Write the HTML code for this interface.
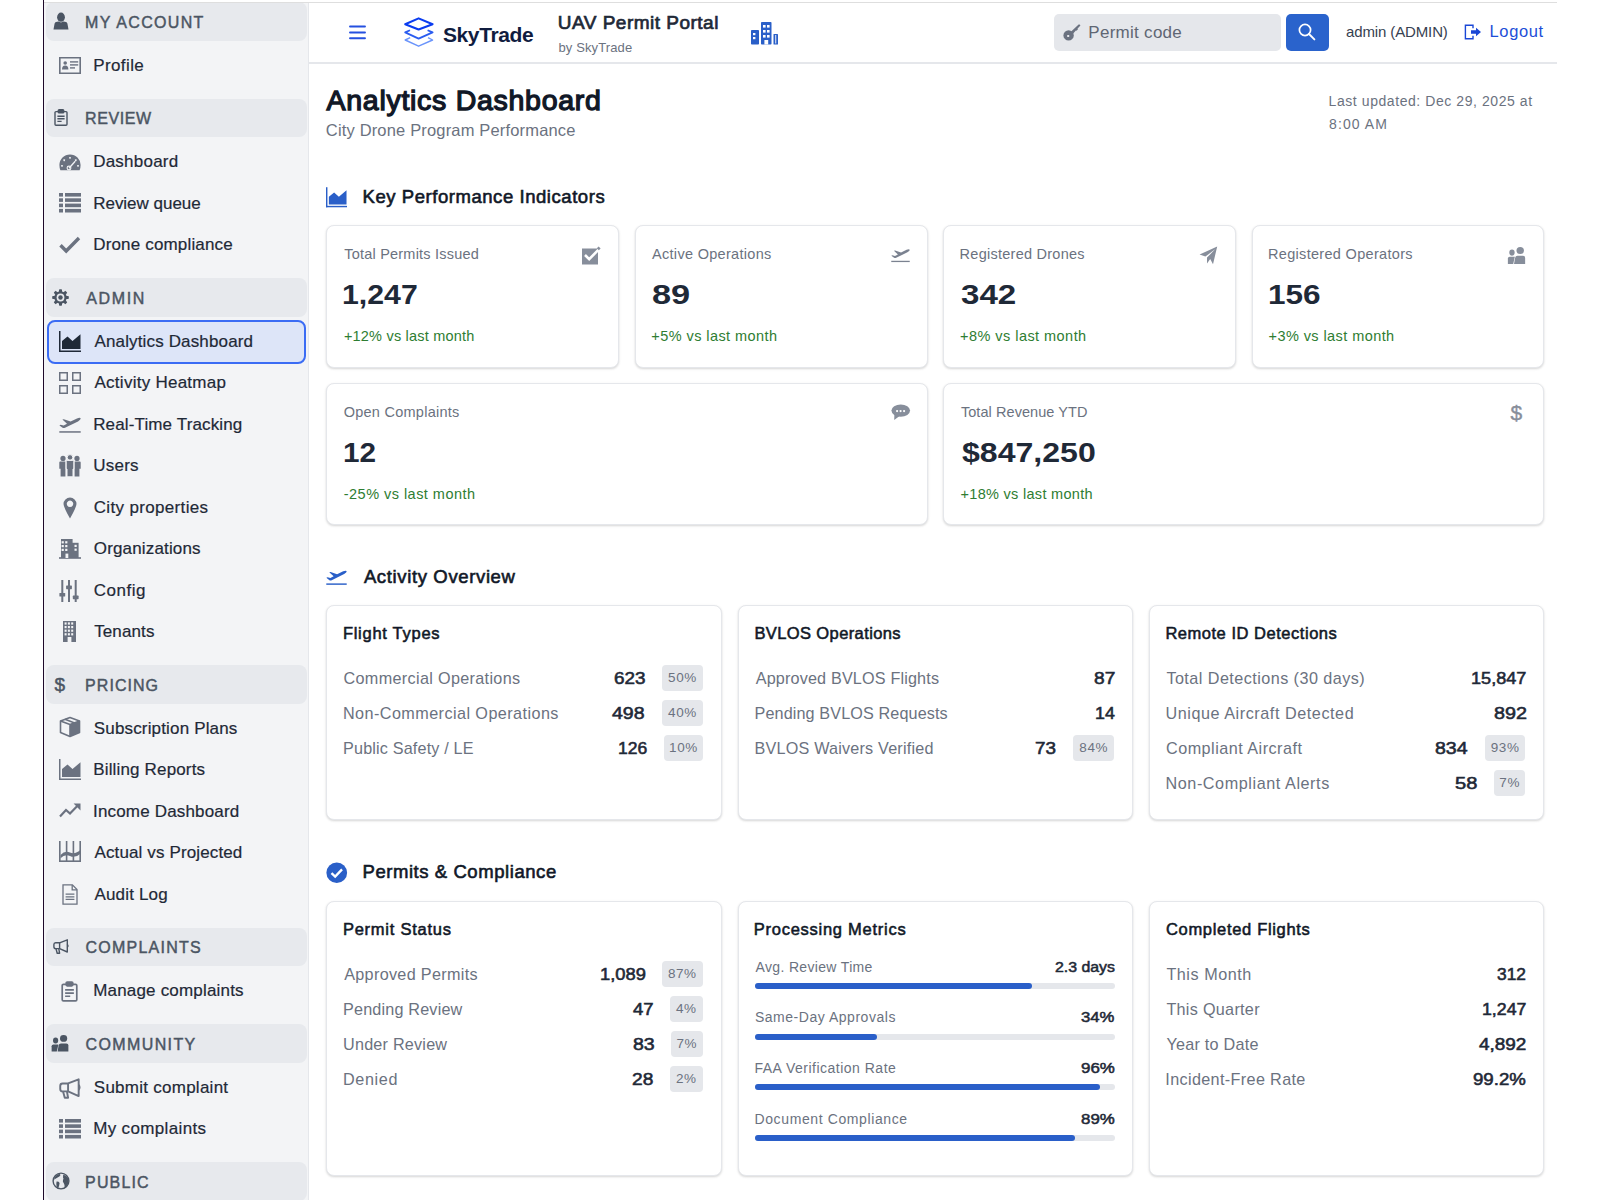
<!DOCTYPE html>
<html><head><meta charset="utf-8"><title>Analytics Dashboard</title>
<style>
html,body{margin:0;padding:0;width:1600px;height:1200px;overflow:hidden;background:#fff;}
body{position:relative;font-family:"Liberation Sans",sans-serif;}
.t{position:absolute;white-space:nowrap;}
svg{overflow:visible}
</style></head><body>
<div style="position:absolute;left:43px;top:0;width:1px;height:1200px;background:#1e0a2a"></div>
<div style="position:absolute;left:44px;top:2px;width:265px;height:1198px;background:#f3f4f6"></div>
<div style="position:absolute;left:308px;top:2px;width:1px;height:1198px;background:#e5e7eb"></div>
<div style="position:absolute;left:45.8px;top:2.0px;width:261.7px;height:38.5px;background:#e7e9ed;border-radius:8px"></div>
<div class="t" style="left:85.10px;top:11.76px;font-size:16px;line-height:21px;color:#4b5563;font-weight:400;letter-spacing:1.322px;-webkit-text-stroke:0.45px #4b5563;">MY ACCOUNT</div>
<svg style="position:absolute;left:53px;top:12.0px;" width="16" height="18" viewBox="0 0 16 18"><g fill="#4b5563"><ellipse cx="8" cy="5.2" rx="3.9" ry="4.6"/><path d="M0.5 17.5 L1.6 11.6 Q2 10 4 9.8 L5.8 9.6 Q8 11.2 10.2 9.6 L12 9.8 Q14 10 14.4 11.6 L15.5 17.5 Z"/></g></svg>
<svg style="position:absolute;left:58.5px;top:57.0px;" width="22" height="17" viewBox="0 0 22 17"><g fill="#6b7280"><path d="M0 0H22V17H0Z M1.6 1.6V15.4H20.4V1.6Z" fill-rule="evenodd"/><circle cx="6.2" cy="6" r="1.8"/><path d="M3 12.6 Q3 8.6 6.2 8.6 Q9.4 8.6 9.4 12.6Z"/><rect x="11" y="4.2" width="8.2" height="1.4"/><rect x="11" y="7.2" width="8.2" height="1.4"/><rect x="11" y="10.2" width="5" height="1.4"/></g></svg>
<div class="t" style="left:93.20px;top:54.61px;font-size:17px;line-height:22px;color:#1f2937;font-weight:400;letter-spacing:0.400px;-webkit-text-stroke:0.2px #1f2937;">Profile</div>
<div style="position:absolute;left:45.8px;top:98.5px;width:261.7px;height:38.5px;background:#e7e9ed;border-radius:8px"></div>
<div class="t" style="left:85.10px;top:108.26px;font-size:16px;line-height:21px;color:#4b5563;font-weight:400;letter-spacing:0.560px;-webkit-text-stroke:0.45px #4b5563;">REVIEW</div>
<svg style="position:absolute;left:54px;top:109.0px;" width="14" height="17" viewBox="0 0 14 17"><g fill="none" stroke="#4b5563" stroke-width="1.4"><rect x="1" y="2.6" width="12" height="13.6" rx="1"/><rect x="4.3" y="0.8" width="5.4" height="3" rx="0.8" fill="#4b5563"/><path d="M3.4 7.2H10.6M3.4 9.8H10.6M3.4 12.4H7.6"/></g></svg>
<svg style="position:absolute;left:58.5px;top:153.5px;" width="22" height="17" viewBox="0 0 22 17"><path fill="#6b7280" fill-rule="evenodd" d="M11 0.5 A10.6 10.6 0 0 1 21.6 11.1 Q21.6 14 20.6 16.3 H1.4 Q0.4 14 0.4 11.1 A10.6 10.6 0 0 1 11 0.5Z M11 3 a0.9 0.9 0 1 0 0.01 0Z M5.2 5.3 a0.9 0.9 0 1 0 0.01 0Z M16.8 5.3 a0.9 0.9 0 1 0 0.01 0Z M3 11 a0.9 0.9 0 1 0 0.01 0Z M19 11 a0.9 0.9 0 1 0 0.01 0Z"/><path d="M10 14.2 L16.2 7.2" stroke="#f3f4f6" stroke-width="1.3"/><circle cx="10" cy="14" r="1.9" fill="none" stroke="#f3f4f6" stroke-width="1.1"/></svg>
<div class="t" style="left:93.20px;top:151.11px;font-size:17px;line-height:22px;color:#1f2937;font-weight:400;letter-spacing:0.225px;-webkit-text-stroke:0.2px #1f2937;">Dashboard</div>
<svg style="position:absolute;left:58.5px;top:193.0px;" width="22" height="21" viewBox="0 0 22 21"><g fill="#6b7280"><rect x="0" y="0.0" width="4" height="3.6"/><rect x="6" y="0.0" width="16" height="3.6"/><rect x="0" y="5.3" width="4" height="3.6"/><rect x="6" y="5.3" width="16" height="3.6"/><rect x="0" y="10.6" width="4" height="3.6"/><rect x="6" y="10.6" width="16" height="3.6"/><rect x="0" y="15.9" width="4" height="3.6"/><rect x="6" y="15.9" width="16" height="3.6"/></g></svg>
<div class="t" style="left:93.20px;top:192.61px;font-size:17px;line-height:22px;color:#1f2937;font-weight:400;letter-spacing:-0.018px;-webkit-text-stroke:0.2px #1f2937;">Review queue</div>
<svg style="position:absolute;left:58.5px;top:236.0px;" width="22" height="18" viewBox="0 0 22 18"><path d="M1.5 9.2 L7.2 15 L20 2" fill="none" stroke="#6b7280" stroke-width="3.4" stroke-linejoin="miter"/></svg>
<div class="t" style="left:93.20px;top:234.11px;font-size:17px;line-height:22px;color:#1f2937;font-weight:400;letter-spacing:0.167px;-webkit-text-stroke:0.2px #1f2937;">Drone compliance</div>
<div style="position:absolute;left:45.8px;top:278.0px;width:261.7px;height:38.5px;background:#e7e9ed;border-radius:8px"></div>
<div class="t" style="left:86.30px;top:287.76px;font-size:16px;line-height:21px;color:#4b5563;font-weight:400;letter-spacing:1.625px;-webkit-text-stroke:0.45px #4b5563;">ADMIN</div>
<svg style="position:absolute;left:52px;top:288.5px;" width="17" height="17" viewBox="0 0 17 17"><g fill="#4b5563"><rect x="7" y="0.2" width="3" height="4" rx="0.8" transform="rotate(0 8.5 8.5)"/><rect x="7" y="0.2" width="3" height="4" rx="0.8" transform="rotate(45 8.5 8.5)"/><rect x="7" y="0.2" width="3" height="4" rx="0.8" transform="rotate(90 8.5 8.5)"/><rect x="7" y="0.2" width="3" height="4" rx="0.8" transform="rotate(135 8.5 8.5)"/><rect x="7" y="0.2" width="3" height="4" rx="0.8" transform="rotate(180 8.5 8.5)"/><rect x="7" y="0.2" width="3" height="4" rx="0.8" transform="rotate(225 8.5 8.5)"/><rect x="7" y="0.2" width="3" height="4" rx="0.8" transform="rotate(270 8.5 8.5)"/><rect x="7" y="0.2" width="3" height="4" rx="0.8" transform="rotate(315 8.5 8.5)"/><circle cx="8.5" cy="8.5" r="6.2"/></g><circle cx="8.5" cy="8.5" r="3.9" fill="#e7e9ed"/><circle cx="8.5" cy="8.5" r="2.2" fill="#4b5563"/></svg>
<div style="position:absolute;left:46.5px;top:319.5px;width:259.5px;height:44.5px;box-sizing:border-box;border:2px solid #3b6cf4;background:#dde5f8;border-radius:8px"></div>
<svg style="position:absolute;left:58.5px;top:331.0px;" width="22" height="21" viewBox="0 0 22 21"><g fill="#1f2937"><rect x="0" y="0" width="1.5" height="21"/><rect x="0" y="19.5" width="22" height="1.5"/><path d="M3 18 V10 L8.5 5.5 L13.5 10 L21.5 3.2 V18Z"/></g></svg>
<div class="t" style="left:94.50px;top:330.61px;font-size:17px;line-height:22px;color:#1f2937;font-weight:400;letter-spacing:0.144px;-webkit-text-stroke:0.2px #1f2937;">Analytics Dashboard</div>
<svg style="position:absolute;left:58.5px;top:372.0px;" width="22" height="22" viewBox="0 0 22 22"><g fill="none" stroke="#6b7280" stroke-width="1.5"><rect x="0.75" y="0.75" width="7.5" height="7.5"/><rect x="13.75" y="0.75" width="7.5" height="7.5"/><rect x="0.75" y="13.75" width="7.5" height="7.5"/><rect x="13.75" y="13.75" width="7.5" height="7.5"/></g></svg>
<div class="t" style="left:94.50px;top:372.11px;font-size:17px;line-height:22px;color:#1f2937;font-weight:400;letter-spacing:0.260px;-webkit-text-stroke:0.2px #1f2937;">Activity Heatmap</div>
<svg style="position:absolute;left:58.5px;top:416.0px;" width="22" height="17" viewBox="0 0 22 17"><g fill="#6b7280"><path d="M3.4 3.6 L4.8 3.2 L11.6 5.6 L18 2.4 Q21.4 1.2 21.7 2.6 Q21.8 3.8 19 5.4 L6 11.8 Q4.6 12.4 3.6 11.8 L0.4 9.4 L1.6 8.8 L4.6 9.6 L8 7.8Z"/><rect x="0.3" y="15.2" width="21.4" height="1.5"/></g></svg>
<div class="t" style="left:93.20px;top:413.61px;font-size:17px;line-height:22px;color:#1f2937;font-weight:400;letter-spacing:0.138px;-webkit-text-stroke:0.2px #1f2937;">Real-Time Tracking</div>
<svg style="position:absolute;left:58.5px;top:455.0px;" width="22" height="22" viewBox="0 0 22 22"><g fill="#6b7280"><circle cx="4" cy="3.4" r="2.6"/><path d="M0.3 7.4 Q0.3 6.6 1.2 6.6 H6.4 V21.5 H1.6 V13.8 H0.3Z"/><circle cx="18" cy="3.4" r="2.6"/><path d="M21.7 7.4 Q21.7 6.6 20.8 6.6 H15.6 V21.5 H20.4 V13.8 H21.7Z"/></g><g fill="#6b7280" stroke="#f3f4f6" stroke-width="1"><circle cx="11" cy="2.4" r="2.8"/><path d="M7.2 6.4 Q7.2 5.4 8.2 5.4 H13.8 Q14.8 5.4 14.8 6.4 V14 H14 V21.8 H8 V14 H7.2Z"/></g></svg>
<div class="t" style="left:93.30px;top:455.11px;font-size:17px;line-height:22px;color:#1f2937;font-weight:400;letter-spacing:0.225px;-webkit-text-stroke:0.2px #1f2937;">Users</div>
<svg style="position:absolute;left:62.5px;top:496.5px;" width="14" height="22" viewBox="0 0 14 22"><path fill="#6b7280" fill-rule="evenodd" d="M7 0.5 A6.5 6.5 0 0 1 13.5 7 Q13.5 10 7 21.5 Q0.5 10 0.5 7 A6.5 6.5 0 0 1 7 0.5Z M7 3.6 a3.2 3.2 0 1 0 0.01 0Z"/></svg>
<div class="t" style="left:93.70px;top:496.61px;font-size:17px;line-height:22px;color:#1f2937;font-weight:400;letter-spacing:0.343px;-webkit-text-stroke:0.2px #1f2937;">City properties</div>
<svg style="position:absolute;left:58.5px;top:539.0px;" width="22" height="20" viewBox="0 0 22 20"><g fill="#6b7280"><rect x="2" y="0" width="11.6" height="19"/><rect x="13" y="3.8" width="6.6" height="15.2"/><rect x="0" y="18.2" width="22" height="1.6"/></g><rect x="2.6" y="2.2" width="2.2" height="2.2" fill="#f3f4f6"/><rect x="2.6" y="6.0" width="2.2" height="2.2" fill="#f3f4f6"/><rect x="2.6" y="9.8" width="2.2" height="2.2" fill="#f3f4f6"/><rect x="6.2" y="2.2" width="2.2" height="2.2" fill="#f3f4f6"/><rect x="6.2" y="6.0" width="2.2" height="2.2" fill="#f3f4f6"/><rect x="6.2" y="9.8" width="2.2" height="2.2" fill="#f3f4f6"/><rect x="15.5" y="5.8" width="2.2" height="2.2" fill="#f3f4f6"/><rect x="15.5" y="9.6" width="2.2" height="2.2" fill="#f3f4f6"/><rect x="6.5" y="14.6" width="2.8" height="4.4" fill="#f3f4f6"/></svg>
<div class="t" style="left:93.80px;top:538.11px;font-size:17px;line-height:22px;color:#1f2937;font-weight:400;letter-spacing:0.158px;-webkit-text-stroke:0.2px #1f2937;">Organizations</div>
<svg style="position:absolute;left:59px;top:579.5px;" width="20" height="22" viewBox="0 0 20 22"><g fill="#6b7280"><rect x="2.3" y="0" width="2" height="22"/><rect x="0.4" y="13" width="5.8" height="3.6" rx="0.6"/><rect x="9" y="0" width="2" height="22"/><rect x="7.1" y="5.6" width="5.8" height="3.6" rx="0.6"/><rect x="15.7" y="0" width="2" height="22"/><rect x="13.8" y="15.6" width="5.8" height="3.6" rx="0.6"/></g></svg>
<div class="t" style="left:93.70px;top:579.61px;font-size:17px;line-height:22px;color:#1f2937;font-weight:400;letter-spacing:0.540px;-webkit-text-stroke:0.2px #1f2937;">Config</div>
<svg style="position:absolute;left:62.5px;top:620.5px;" width="13" height="21" viewBox="0 0 13 21"><rect x="0" y="0" width="13" height="21" fill="#6b7280"/><rect x="1.6" y="1.4" width="2" height="2.2" fill="#f3f4f6"/><rect x="1.6" y="5.0" width="2" height="2.2" fill="#f3f4f6"/><rect x="1.6" y="8.6" width="2" height="2.2" fill="#f3f4f6"/><rect x="1.6" y="12.2" width="2" height="2.2" fill="#f3f4f6"/><rect x="4.9" y="1.4" width="2" height="2.2" fill="#f3f4f6"/><rect x="4.9" y="5.0" width="2" height="2.2" fill="#f3f4f6"/><rect x="4.9" y="8.6" width="2" height="2.2" fill="#f3f4f6"/><rect x="4.9" y="12.2" width="2" height="2.2" fill="#f3f4f6"/><rect x="8.2" y="1.4" width="2" height="2.2" fill="#f3f4f6"/><rect x="8.2" y="5.0" width="2" height="2.2" fill="#f3f4f6"/><rect x="8.2" y="8.6" width="2" height="2.2" fill="#f3f4f6"/><rect x="8.2" y="12.2" width="2" height="2.2" fill="#f3f4f6"/><rect x="4.6" y="16" width="3.8" height="5" fill="#f3f4f6"/></svg>
<div class="t" style="left:94.20px;top:621.11px;font-size:17px;line-height:22px;color:#1f2937;font-weight:400;letter-spacing:0.108px;-webkit-text-stroke:0.2px #1f2937;">Tenants</div>
<div style="position:absolute;left:45.8px;top:665.0px;width:261.7px;height:38.5px;background:#e7e9ed;border-radius:8px"></div>
<div class="t" style="left:85.10px;top:674.76px;font-size:16px;line-height:21px;color:#4b5563;font-weight:400;letter-spacing:1.042px;-webkit-text-stroke:0.45px #4b5563;">PRICING</div>
<div class="t" style="left:54.50px;top:672.22px;font-size:19px;line-height:25px;color:#4b5563;font-weight:400;-webkit-text-stroke:0.5px #4b5563;">$</div>
<svg style="position:absolute;left:58.5px;top:716.0px;" width="22" height="22" viewBox="0 0 22 22"><g fill="none" stroke="#6b7280" stroke-width="1.6" stroke-linejoin="round"><path d="M11 1.5 L20.5 5 V16.6 L11 20.5 L1.5 16.6 V5Z"/><path d="M1.5 5 L11 8.6 L20.5 5 M11 8.6 V20.5 M6 3.3 L15.6 7"/></g><path fill="#6b7280" d="M11 8.6 L20.5 5 V16.6 L11 20.5Z"/></svg>
<div class="t" style="left:93.80px;top:717.61px;font-size:17px;line-height:22px;color:#1f2937;font-weight:400;letter-spacing:0.162px;-webkit-text-stroke:0.2px #1f2937;">Subscription Plans</div>
<svg style="position:absolute;left:58.5px;top:758.5px;" width="22" height="21" viewBox="0 0 22 21"><g fill="#6b7280"><rect x="0" y="0" width="1.5" height="21"/><rect x="0" y="19.5" width="22" height="1.5"/><path d="M3 18 V10 L8.5 5.5 L13.5 10 L21.5 3.2 V18Z"/></g></svg>
<div class="t" style="left:93.20px;top:759.11px;font-size:17px;line-height:22px;color:#1f2937;font-weight:400;letter-spacing:0.164px;-webkit-text-stroke:0.2px #1f2937;">Billing Reports</div>
<svg style="position:absolute;left:58.5px;top:801.5px;" width="22" height="16" viewBox="0 0 22 16"><path d="M1 14.5 L7 8 L11 11.5 L19 3.2" fill="none" stroke="#6b7280" stroke-width="2.2"/><path d="M14.6 1.5 H21.5 V8.4Z" fill="#6b7280"/></svg>
<div class="t" style="left:93.00px;top:800.61px;font-size:17px;line-height:22px;color:#1f2937;font-weight:400;letter-spacing:0.177px;-webkit-text-stroke:0.2px #1f2937;">Income Dashboard</div>
<svg style="position:absolute;left:58.5px;top:841.0px;" width="22" height="21" viewBox="0 0 22 21"><g fill="#6b7280"><rect x="0" y="0" width="1.6" height="21"/><rect x="0" y="19.4" width="22" height="1.6"/><rect x="6.8" y="0" width="1.6" height="20"/><rect x="13.6" y="0" width="1.6" height="20"/><rect x="20.4" y="0" width="1.6" height="20"/><path d="M1.5 14 Q6 9 11 11.5 Q16 14 21.8 8.5 V12.4 Q16 17.6 11 15 Q6 12.6 1.5 17.2Z"/></g></svg>
<div class="t" style="left:94.50px;top:842.11px;font-size:17px;line-height:22px;color:#1f2937;font-weight:400;letter-spacing:0.125px;-webkit-text-stroke:0.2px #1f2937;">Actual vs Projected</div>
<svg style="position:absolute;left:61.5px;top:884.0px;" width="16" height="21" viewBox="0 0 16 21"><g fill="none" stroke="#6b7280" stroke-width="1.3"><path d="M1 0.9 H10.4 L15 5.5 V20.1 H1Z"/><path d="M10.2 1 V5.8 H15" /><path d="M3.6 10.2 H12.4 M3.6 12.8 H12.4 M3.6 15.4 H12.4"/></g></svg>
<div class="t" style="left:94.50px;top:883.61px;font-size:17px;line-height:22px;color:#1f2937;font-weight:400;letter-spacing:0.162px;-webkit-text-stroke:0.2px #1f2937;">Audit Log</div>
<div style="position:absolute;left:45.8px;top:927.5px;width:261.7px;height:38.5px;background:#e7e9ed;border-radius:8px"></div>
<div class="t" style="left:85.60px;top:937.26px;font-size:16px;line-height:21px;color:#4b5563;font-weight:400;letter-spacing:1.222px;-webkit-text-stroke:0.45px #4b5563;">COMPLAINTS</div>
<svg style="position:absolute;left:53px;top:939.0px;" width="16" height="15" viewBox="0 0 16 15"><g fill="none" stroke="#4b5563" stroke-width="1.4" stroke-linejoin="round"><path d="M14.3 0.8 V13 L6.6 9.6 H2.6 Q0.9 9.6 0.9 7.8 V5.6 Q0.9 3.8 2.6 3.8 H6.6Z"/><path d="M6.6 3.8 V9.6"/><path d="M3 9.8 L4.2 14.2 H6.6 L5.8 9.8"/></g><path d="M14.3 4.8 Q15.8 6.8 14.3 8.6" stroke="#4b5563" fill="none" stroke-width="1.2"/></svg>
<svg style="position:absolute;left:61px;top:980.5px;" width="17" height="21" viewBox="0 0 14 17"><g fill="none" stroke="#6b7280" stroke-width="1.4"><rect x="1" y="2.6" width="12" height="13.6" rx="1"/><rect x="4.3" y="0.8" width="5.4" height="3" rx="0.8" fill="#6b7280"/><path d="M3.4 7.2H10.6M3.4 9.8H10.6M3.4 12.4H7.6"/></g></svg>
<div class="t" style="left:93.20px;top:980.11px;font-size:17px;line-height:22px;color:#1f2937;font-weight:400;letter-spacing:0.188px;-webkit-text-stroke:0.2px #1f2937;">Manage complaints</div>
<div style="position:absolute;left:45.8px;top:1024.0px;width:261.7px;height:38.5px;background:#e7e9ed;border-radius:8px"></div>
<div class="t" style="left:85.60px;top:1033.76px;font-size:16px;line-height:21px;color:#4b5563;font-weight:400;letter-spacing:1.375px;-webkit-text-stroke:0.45px #4b5563;">COMMUNITY</div>
<svg style="position:absolute;left:51px;top:1034.5px;" width="18" height="17" viewBox="0 0 18 17"><g fill="#4b5563"><ellipse cx="4.6" cy="5.4" rx="2.6" ry="3"/><path d="M0.6 16.6 V11.2 Q0.6 9.4 2.4 9.4 H7.4 L5.8 16.6Z"/><ellipse cx="12.6" cy="3.4" rx="3.6" ry="3.4"/><path d="M6.6 16.6 L7.6 10.6 Q8 8.6 10 8.6 H15.4 Q17.4 8.6 17.4 10.6 V16.6Z"/></g></svg>
<svg style="position:absolute;left:59px;top:1077.5px;" width="22" height="21" viewBox="0 0 16 15"><g fill="none" stroke="#6b7280" stroke-width="1.4" stroke-linejoin="round"><path d="M14.3 0.8 V13 L6.6 9.6 H2.6 Q0.9 9.6 0.9 7.8 V5.6 Q0.9 3.8 2.6 3.8 H6.6Z"/><path d="M6.6 3.8 V9.6"/><path d="M3 9.8 L4.2 14.2 H6.6 L5.8 9.8"/></g><path d="M14.3 4.8 Q15.8 6.8 14.3 8.6" stroke="#6b7280" fill="none" stroke-width="1.2"/></svg>
<div class="t" style="left:93.80px;top:1076.61px;font-size:17px;line-height:22px;color:#1f2937;font-weight:400;letter-spacing:0.260px;-webkit-text-stroke:0.2px #1f2937;">Submit complaint</div>
<svg style="position:absolute;left:58.5px;top:1118.5px;" width="22" height="21" viewBox="0 0 22 21"><g fill="#6b7280"><rect x="0" y="0.0" width="4" height="3.6"/><rect x="6" y="0.0" width="16" height="3.6"/><rect x="0" y="5.3" width="4" height="3.6"/><rect x="6" y="5.3" width="16" height="3.6"/><rect x="0" y="10.6" width="4" height="3.6"/><rect x="6" y="10.6" width="16" height="3.6"/><rect x="0" y="15.9" width="4" height="3.6"/><rect x="6" y="15.9" width="16" height="3.6"/></g></svg>
<div class="t" style="left:93.20px;top:1118.11px;font-size:17px;line-height:22px;color:#1f2937;font-weight:400;letter-spacing:0.350px;-webkit-text-stroke:0.2px #1f2937;">My complaints</div>
<div style="position:absolute;left:45.8px;top:1162.0px;width:261.7px;height:38.5px;background:#e7e9ed;border-radius:8px"></div>
<div class="t" style="left:85.10px;top:1171.76px;font-size:16px;line-height:21px;color:#4b5563;font-weight:400;letter-spacing:1.140px;-webkit-text-stroke:0.45px #4b5563;">PUBLIC</div>
<svg style="position:absolute;left:52px;top:1172.0px;" width="18" height="18" viewBox="0 0 18 18"><circle cx="9" cy="9" r="7.9" fill="none" stroke="#4b5563" stroke-width="1.4"/><g fill="#4b5563"><path d="M2.6 5.2 Q4.6 2.4 7.4 1.8 L8.6 3 Q7.6 4.8 5.6 5.6 Q4 6.4 2.2 7.6Z"/><path d="M4.6 9.6 Q6.8 9.4 7.6 11 Q7.4 13.6 6 16.4 Q4.6 15.6 4.4 13.2 Q4.2 11.4 4.6 9.6Z"/><path d="M11.2 2.4 Q14.6 3.4 16.2 6.6 Q16.8 9.4 16 12.2 Q14.6 15 12.6 15.6 Q12.8 12.6 11.8 11.2 Q10.4 10 11 8 Q12 6.6 11 5.4Z"/></g></svg>
<div style="position:absolute;left:44px;top:2px;width:1513px;height:1px;background:#dedede"></div>
<div style="position:absolute;left:309px;top:62px;width:1248px;height:1.5px;background:#e5e7eb"></div>
<svg style="position:absolute;left:348.5px;top:24.5px;" width="17" height="15" viewBox="0 0 17 15"><g stroke="#2550e0" stroke-width="1.9" stroke-linecap="round"><path d="M1 1.5H16M1 7.5H16M1 13.3H16"/></g></svg>
<svg style="position:absolute;left:403px;top:16px;" width="32" height="32" viewBox="0 0 32 32"><path d="M2.2 8.2 L15.6 2.4 L29.6 8.2 L15.6 13.4Z" fill="none" stroke="#0a3cf0" stroke-width="2.1" stroke-linejoin="round"/><path d="M7 14.2 L2.2 16.4 L15.6 22.6 L29.6 16.4 L24.6 14.2" fill="none" stroke="#2a5cf0" stroke-width="1.8" stroke-linejoin="round"/><path d="M7.2 21.6 L2.2 24 L15.6 30.2 L29.6 24 L25 21.6" fill="none" stroke="#6a94fb" stroke-width="1.4" stroke-linejoin="round"/></svg>
<div class="t" style="left:442.90px;top:20.72px;font-size:21px;line-height:27px;color:#101c3f;font-weight:700;letter-spacing:-0.371px;">SkyTrade</div>
<div class="t" style="left:557.80px;top:9.92px;font-size:19px;line-height:25px;color:#1f2937;font-weight:400;letter-spacing:0.488px;-webkit-text-stroke:0.7px #1f2937;">UAV Permit Portal</div>
<div class="t" style="left:558.50px;top:38.50px;font-size:13px;line-height:17px;color:#6b7280;font-weight:400;letter-spacing:0.120px;">by SkyTrade</div>
<svg style="position:absolute;left:751px;top:22px;" width="27" height="23" viewBox="0 0 27 23"><g fill="#2a5fc8"><rect x="0" y="8" width="8" height="14.5" rx="0.8"/><rect x="10" y="0" width="10.5" height="22.5" rx="0.8"/><rect x="22.5" y="12" width="4.5" height="10.5" rx="0.6"/></g><g fill="#fff"><rect x="2" y="11" width="2.4" height="2.2"/><rect x="2" y="15" width="2.4" height="2.2"/><rect x="12" y="3" width="2.6" height="2.6"/><rect x="16" y="3" width="2.6" height="2.6"/><rect x="12" y="8" width="2.6" height="2.6"/><rect x="16" y="8" width="2.6" height="2.6"/><rect x="12" y="13" width="2.6" height="2.6"/><rect x="16" y="13" width="2.6" height="2.6"/><rect x="13.4" y="18" width="3.8" height="4.5"/><rect x="24.3" y="13" width="0.9" height="8.5"/></g></svg>
<div style="position:absolute;left:1053.5px;top:13.5px;width:227.5px;height:37px;background:#e5e7eb;border-radius:5px"></div>
<svg style="position:absolute;left:1062px;top:22px;" width="20" height="20" viewBox="0 0 20 20"><g fill="#6b7280"><circle cx="6.6" cy="13.4" r="5.2"/><path d="M8.4 10.2 L16.6 2.6 Q18 2 18.4 3.4 L11 11.8Z"/><rect x="13.2" y="6.2" width="2.4" height="2" transform="rotate(45 14.4 7.2)"/></g><rect x="5.2" y="13" width="2" height="2" fill="#e5e7eb"/></svg>
<div class="t" style="left:1088.30px;top:21.91px;font-size:17px;line-height:22px;color:#5f6673;font-weight:400;letter-spacing:0.280px;">Permit code</div>
<div style="position:absolute;left:1285.5px;top:13.5px;width:43.5px;height:37px;background:#2a63cc;border-radius:5px"></div>
<svg style="position:absolute;left:1297px;top:22px;" width="20" height="20" viewBox="0 0 20 20"><circle cx="8" cy="8" r="5.6" fill="none" stroke="#fff" stroke-width="1.7"/><path d="M12 12 L17.4 17.4" stroke="#fff" stroke-width="1.9" stroke-linecap="round"/></svg>
<div class="t" style="left:1346.10px;top:22.10px;font-size:15px;line-height:20px;color:#374151;font-weight:400;letter-spacing:-0.133px;">admin (ADMIN)</div>
<svg style="position:absolute;left:1464px;top:24px;" width="18" height="16" viewBox="0 0 18 16"><path d="M9 4.2 V1.2 H1.4 V14.8 H9 V11.8" fill="none" stroke="#1a47d6" stroke-width="1.4"/><path d="M7 6.2 H12 V3.8 L17 8 L12 12.2 V9.8 H7Z" fill="#1a47d6"/></svg>
<div class="t" style="left:1489.60px;top:21.48px;font-size:16.5px;line-height:21px;color:#1d4ed8;font-weight:400;letter-spacing:0.600px;">Logout</div>
<div class="t" style="left:326.50px;top:81.62px;font-size:28.5px;line-height:37px;color:#111827;font-weight:400;letter-spacing:0.722px;-webkit-text-stroke:1.3px #111827;">Analytics Dashboard</div>
<div class="t" style="left:325.80px;top:120.38px;font-size:16.5px;line-height:21px;color:#6b7280;font-weight:400;letter-spacing:0.166px;">City Drone Program Performance</div>
<div class="t" style="left:1328.60px;top:91.65px;font-size:14px;line-height:18px;color:#6b7280;font-weight:400;letter-spacing:0.568px;">Last updated: Dec 29, 2025 at</div>
<div class="t" style="left:1329.10px;top:114.65px;font-size:14px;line-height:18px;color:#6b7280;font-weight:400;letter-spacing:1.067px;">8:00 AM</div>
<svg style="position:absolute;left:326px;top:186.5px;" width="21" height="20.5" viewBox="0 0 22 21"><g fill="#2a5fc8"><rect x="0" y="0" width="1.5" height="21"/><rect x="0" y="19.5" width="22" height="1.5"/><path d="M3 18 V10 L8.5 5.5 L13.5 10 L21.5 3.2 V18Z"/></g></svg>
<div class="t" style="left:362.50px;top:184.99px;font-size:18.5px;line-height:24px;color:#111827;font-weight:400;letter-spacing:0.556px;-webkit-text-stroke:0.6px #111827;">Key Performance Indicators</div>
<svg style="position:absolute;left:326px;top:568px;" width="21" height="18" viewBox="0 0 22 17"><g fill="#2a5fc8"><path d="M3.4 3.6 L4.8 3.2 L11.6 5.6 L18 2.4 Q21.4 1.2 21.7 2.6 Q21.8 3.8 19 5.4 L6 11.8 Q4.6 12.4 3.6 11.8 L0.4 9.4 L1.6 8.8 L4.6 9.6 L8 7.8Z"/><rect x="0.3" y="15.2" width="21.4" height="1.5"/></g></svg>
<div class="t" style="left:363.90px;top:565.29px;font-size:18.5px;line-height:24px;color:#111827;font-weight:400;letter-spacing:0.637px;-webkit-text-stroke:0.6px #111827;">Activity Overview</div>
<svg style="position:absolute;left:325.5px;top:862px;" width="21.5" height="21.5" viewBox="0 0 22 22"><circle cx="11" cy="11" r="10.6" fill="#2a5fc8"/><path d="M5.6 11.4 L9.4 15 L16.4 7.6" fill="none" stroke="#fff" stroke-width="2.4"/></svg>
<div class="t" style="left:362.50px;top:859.59px;font-size:18.5px;line-height:24px;color:#111827;font-weight:400;letter-spacing:0.563px;-webkit-text-stroke:0.6px #111827;">Permits &amp; Compliance</div>
<div style="position:absolute;left:326px;top:225px;width:293px;height:143px;box-sizing:border-box;background:#fff;border:1px solid #e5e7eb;border-radius:8px;box-shadow:0 1px 3px rgba(0,0,0,0.10),0 1px 2px rgba(0,0,0,0.07)"></div>
<div class="t" style="left:344.30px;top:244.88px;font-size:14.5px;line-height:19px;color:#6b7280;font-weight:400;letter-spacing:0.205px;">Total Permits Issued</div>
<div class="t" style="left:342.49px;top:276.42px;font-size:28.5px;line-height:37px;color:#1f2937;font-weight:700;transform-origin:0 0;transform:scaleX(1.0615);">1,247</div>
<div class="t" style="left:343.90px;top:327.48px;font-size:14.5px;line-height:19px;color:#2e7d32;font-weight:400;letter-spacing:0.206px;">+12% vs last month</div>
<svg style="position:absolute;left:582px;top:246.5px;" width="19" height="18" viewBox="0 0 19 18"><rect x="0" y="1.5" width="16" height="16" fill="#878e9b"/><path d="M3 8 L7.2 12.2 L16.8 2.4" fill="none" stroke="#fff" stroke-width="2.6"/><path d="M14.8 1.2 L16.6 -0.4 L18.6 1.6 L16.8 3.2Z" fill="#878e9b"/></svg>
<div style="position:absolute;left:634.5px;top:225px;width:293px;height:143px;box-sizing:border-box;background:#fff;border:1px solid #e5e7eb;border-radius:8px;box-shadow:0 1px 3px rgba(0,0,0,0.10),0 1px 2px rgba(0,0,0,0.07)"></div>
<div class="t" style="left:652.00px;top:244.88px;font-size:14.5px;line-height:19px;color:#6b7280;font-weight:400;letter-spacing:0.306px;">Active Operations</div>
<div class="t" style="left:652.02px;top:276.42px;font-size:28.5px;line-height:37px;color:#1f2937;font-weight:700;transform-origin:0 0;transform:scaleX(1.2047);">89</div>
<div class="t" style="left:651.30px;top:327.48px;font-size:14.5px;line-height:19px;color:#2e7d32;font-weight:400;letter-spacing:0.425px;">+5% vs last month</div>
<svg style="position:absolute;left:890.5px;top:246.5px;" width="19" height="16" viewBox="0 0 22 17"><g fill="#7b8290"><path d="M3.4 3.6 L4.8 3.2 L11.6 5.6 L18 2.4 Q21.4 1.2 21.7 2.6 Q21.8 3.8 19 5.4 L6 11.8 Q4.6 12.4 3.6 11.8 L0.4 9.4 L1.6 8.8 L4.6 9.6 L8 7.8Z"/><rect x="0.3" y="15.2" width="21.4" height="1.5"/></g></svg>
<div style="position:absolute;left:943px;top:225px;width:293px;height:143px;box-sizing:border-box;background:#fff;border:1px solid #e5e7eb;border-radius:8px;box-shadow:0 1px 3px rgba(0,0,0,0.10),0 1px 2px rgba(0,0,0,0.07)"></div>
<div class="t" style="left:959.60px;top:244.88px;font-size:14.5px;line-height:19px;color:#6b7280;font-weight:400;letter-spacing:0.256px;">Registered Drones</div>
<div class="t" style="left:961.09px;top:276.42px;font-size:28.5px;line-height:37px;color:#1f2937;font-weight:700;transform-origin:0 0;transform:scaleX(1.1619);">342</div>
<div class="t" style="left:960.10px;top:327.48px;font-size:14.5px;line-height:19px;color:#2e7d32;font-weight:400;letter-spacing:0.450px;">+8% vs last month</div>
<svg style="position:absolute;left:1199px;top:245.5px;" width="19" height="19" viewBox="0 0 19 19"><path fill="#878e9b" d="M18.2 0.6 L0.6 8.6 L6.4 10.6 L16.4 3 L8 11.6 V17.6 L11.2 13 L14 18.2Z"/></svg>
<div style="position:absolute;left:1251.5px;top:225px;width:292.5px;height:143px;box-sizing:border-box;background:#fff;border:1px solid #e5e7eb;border-radius:8px;box-shadow:0 1px 3px rgba(0,0,0,0.10),0 1px 2px rgba(0,0,0,0.07)"></div>
<div class="t" style="left:1268.00px;top:244.88px;font-size:14.5px;line-height:19px;color:#6b7280;font-weight:400;letter-spacing:0.311px;">Registered Operators</div>
<div class="t" style="left:1268.11px;top:276.42px;font-size:28.5px;line-height:37px;color:#1f2937;font-weight:700;transform-origin:0 0;transform:scaleX(1.1051);">156</div>
<div class="t" style="left:1268.50px;top:327.48px;font-size:14.5px;line-height:19px;color:#2e7d32;font-weight:400;letter-spacing:0.425px;">+3% vs last month</div>
<svg style="position:absolute;left:1507px;top:246.5px;" width="19" height="17.5" viewBox="0 0 18 17"><g fill="#878e9b"><ellipse cx="4.6" cy="5.4" rx="2.6" ry="3"/><path d="M0.6 16.6 V11.2 Q0.6 9.4 2.4 9.4 H7.4 L5.8 16.6Z"/><ellipse cx="12.6" cy="3.4" rx="3.6" ry="3.4"/><path d="M6.6 16.6 L7.6 10.6 Q8 8.6 10 8.6 H15.4 Q17.4 8.6 17.4 10.6 V16.6Z"/></g></svg>
<div style="position:absolute;left:326px;top:383px;width:602px;height:142px;box-sizing:border-box;background:#fff;border:1px solid #e5e7eb;border-radius:8px;box-shadow:0 1px 3px rgba(0,0,0,0.10),0 1px 2px rgba(0,0,0,0.07)"></div>
<div class="t" style="left:343.70px;top:402.88px;font-size:14.5px;line-height:19px;color:#6b7280;font-weight:400;letter-spacing:0.257px;">Open Complaints</div>
<div class="t" style="left:342.52px;top:434.42px;font-size:28.5px;line-height:37px;color:#1f2937;font-weight:700;transform-origin:0 0;transform:scaleX(1.0417);">12</div>
<div class="t" style="left:343.80px;top:485.48px;font-size:14.5px;line-height:19px;color:#2e7d32;font-weight:400;letter-spacing:0.465px;">-25% vs last month</div>
<svg style="position:absolute;left:890.5px;top:403.5px;" width="19.5" height="16.5" viewBox="0 0 19.5 16.5"><ellipse cx="9.75" cy="6.6" rx="9.3" ry="6.2" fill="#878e9b"/><path d="M3.4 10.6 L3.2 16 L8.6 12Z" fill="#878e9b"/><g fill="#fff"><circle cx="6.1" cy="7.1" r="1.1"/><circle cx="9.6" cy="7.1" r="1.1"/><circle cx="13.1" cy="7.1" r="1.1"/></g></svg>
<div style="position:absolute;left:943px;top:383px;width:601px;height:142px;box-sizing:border-box;background:#fff;border:1px solid #e5e7eb;border-radius:8px;box-shadow:0 1px 3px rgba(0,0,0,0.10),0 1px 2px rgba(0,0,0,0.07)"></div>
<div class="t" style="left:960.90px;top:402.88px;font-size:14.5px;line-height:19px;color:#6b7280;font-weight:400;letter-spacing:0.069px;">Total Revenue YTD</div>
<div class="t" style="left:961.55px;top:434.42px;font-size:28.5px;line-height:37px;color:#1f2937;font-weight:700;transform-origin:0 0;transform:scaleX(1.1253);">$847,250</div>
<div class="t" style="left:960.50px;top:485.48px;font-size:14.5px;line-height:19px;color:#2e7d32;font-weight:400;letter-spacing:0.300px;">+18% vs last month</div>
<div class="t" style="left:1510.50px;top:398.72px;font-size:21px;line-height:27px;color:#878e9b;font-weight:400;-webkit-text-stroke:0.4px #878e9b;">$</div>
<div style="position:absolute;left:326px;top:605px;width:395.5px;height:214.5px;box-sizing:border-box;background:#fff;border:1px solid #e5e7eb;border-radius:8px;box-shadow:0 1px 3px rgba(0,0,0,0.10),0 1px 2px rgba(0,0,0,0.07)"></div>
<div class="t" style="left:342.90px;top:623.18px;font-size:16.5px;line-height:21px;color:#111827;font-weight:400;letter-spacing:0.727px;-webkit-text-stroke:0.55px #111827;">Flight Types</div>
<div class="t" style="left:343.50px;top:667.59px;font-size:16.2px;line-height:21px;color:#6b7280;font-weight:400;letter-spacing:0.330px;">Commercial Operations</div>
<div style="position:absolute;left:662.2px;top:665.4px;width:40.5px;height:25.2px;background:#e5e7eb;border-radius:4px"></div>
<div class="t" style="left:682.45px;top:669.12px;font-size:13.5px;line-height:18px;color:#6b7280;font-weight:400;letter-spacing:0.600px;transform:translateX(-50%);">50%</div>
<div class="t" style="left:613.56px;top:667.66px;font-size:16px;line-height:21px;color:#1f2937;font-weight:400;-webkit-text-stroke:0.55px #1f2937;transform-origin:0 0;transform:scaleX(1.1786);">623</div>
<div class="t" style="left:343.00px;top:702.59px;font-size:16.2px;line-height:21px;color:#6b7280;font-weight:400;letter-spacing:0.429px;">Non-Commercial Operations</div>
<div style="position:absolute;left:662.2px;top:700.4px;width:40.5px;height:25.2px;background:#e5e7eb;border-radius:4px"></div>
<div class="t" style="left:682.45px;top:704.12px;font-size:13.5px;line-height:18px;color:#6b7280;font-weight:400;letter-spacing:0.600px;transform:translateX(-50%);">40%</div>
<div class="t" style="left:612.41px;top:702.66px;font-size:16px;line-height:21px;color:#1f2937;font-weight:400;-webkit-text-stroke:0.55px #1f2937;transform-origin:0 0;transform:scaleX(1.2188);">498</div>
<div class="t" style="left:343.00px;top:737.59px;font-size:16.2px;line-height:21px;color:#6b7280;font-weight:400;letter-spacing:0.165px;">Public Safety / LE</div>
<div style="position:absolute;left:664.2px;top:735.4px;width:38.5px;height:25.2px;background:#e5e7eb;border-radius:4px"></div>
<div class="t" style="left:683.45px;top:739.12px;font-size:13.5px;line-height:18px;color:#6b7280;font-weight:400;letter-spacing:0.600px;transform:translateX(-50%);">10%</div>
<div class="t" style="left:617.59px;top:737.66px;font-size:16px;line-height:21px;color:#1f2937;font-weight:400;-webkit-text-stroke:0.55px #1f2937;transform-origin:0 0;transform:scaleX(1.0927);">126</div>
<div style="position:absolute;left:737.5px;top:605px;width:395.5px;height:214.5px;box-sizing:border-box;background:#fff;border:1px solid #e5e7eb;border-radius:8px;box-shadow:0 1px 3px rgba(0,0,0,0.10),0 1px 2px rgba(0,0,0,0.07)"></div>
<div class="t" style="left:754.40px;top:623.18px;font-size:16.5px;line-height:21px;color:#111827;font-weight:400;letter-spacing:0.393px;-webkit-text-stroke:0.55px #111827;">BVLOS Operations</div>
<div class="t" style="left:755.70px;top:667.59px;font-size:16.2px;line-height:21px;color:#6b7280;font-weight:400;letter-spacing:0.162px;">Approved BVLOS Flights</div>
<div class="t" style="left:1093.76px;top:667.66px;font-size:16px;line-height:21px;color:#1f2937;font-weight:400;-webkit-text-stroke:0.55px #1f2937;transform-origin:0 0;transform:scaleX(1.1963);">87</div>
<div class="t" style="left:754.50px;top:702.59px;font-size:16.2px;line-height:21px;color:#6b7280;font-weight:400;letter-spacing:0.114px;">Pending BVLOS Requests</div>
<div class="t" style="left:1094.87px;top:702.66px;font-size:16px;line-height:21px;color:#1f2937;font-weight:400;-webkit-text-stroke:0.55px #1f2937;transform-origin:0 0;transform:scaleX(1.1118);">14</div>
<div class="t" style="left:754.50px;top:737.59px;font-size:16.2px;line-height:21px;color:#6b7280;font-weight:400;letter-spacing:0.195px;">BVLOS Waivers Verified</div>
<div style="position:absolute;left:1073.4px;top:735.4px;width:40.69999999999982px;height:25.2px;background:#e5e7eb;border-radius:4px"></div>
<div class="t" style="left:1093.75px;top:739.12px;font-size:13.5px;line-height:18px;color:#6b7280;font-weight:400;letter-spacing:0.600px;transform:translateX(-50%);">84%</div>
<div class="t" style="left:1035.36px;top:737.66px;font-size:16px;line-height:21px;color:#1f2937;font-weight:400;-webkit-text-stroke:0.55px #1f2937;transform-origin:0 0;transform:scaleX(1.1779);">73</div>
<div style="position:absolute;left:1148.5px;top:605px;width:395.5px;height:214.5px;box-sizing:border-box;background:#fff;border:1px solid #e5e7eb;border-radius:8px;box-shadow:0 1px 3px rgba(0,0,0,0.10),0 1px 2px rgba(0,0,0,0.07)"></div>
<div class="t" style="left:1165.40px;top:623.18px;font-size:16.5px;line-height:21px;color:#111827;font-weight:400;letter-spacing:0.526px;-webkit-text-stroke:0.55px #111827;">Remote ID Detections</div>
<div class="t" style="left:1166.40px;top:667.59px;font-size:16.2px;line-height:21px;color:#6b7280;font-weight:400;letter-spacing:0.444px;">Total Detections (30 days)</div>
<div class="t" style="left:1471.04px;top:667.66px;font-size:16px;line-height:21px;color:#1f2937;font-weight:400;-webkit-text-stroke:0.55px #1f2937;transform-origin:0 0;transform:scaleX(1.1322);">15,847</div>
<div class="t" style="left:1165.50px;top:702.59px;font-size:16.2px;line-height:21px;color:#6b7280;font-weight:400;letter-spacing:0.552px;">Unique Aircraft Detected</div>
<div class="t" style="left:1493.54px;top:702.66px;font-size:16px;line-height:21px;color:#1f2937;font-weight:400;-webkit-text-stroke:0.55px #1f2937;transform-origin:0 0;transform:scaleX(1.2341);">892</div>
<div class="t" style="left:1166.00px;top:737.59px;font-size:16.2px;line-height:21px;color:#6b7280;font-weight:400;letter-spacing:0.482px;">Compliant Aircraft</div>
<div style="position:absolute;left:1484.8px;top:735.4px;width:40.700000000000045px;height:25.2px;background:#e5e7eb;border-radius:4px"></div>
<div class="t" style="left:1505.15px;top:739.12px;font-size:13.5px;line-height:18px;color:#6b7280;font-weight:400;letter-spacing:0.600px;transform:translateX(-50%);">93%</div>
<div class="t" style="left:1434.95px;top:737.66px;font-size:16px;line-height:21px;color:#1f2937;font-weight:400;-webkit-text-stroke:0.55px #1f2937;transform-origin:0 0;transform:scaleX(1.2196);">834</div>
<div class="t" style="left:1165.50px;top:772.59px;font-size:16.2px;line-height:21px;color:#6b7280;font-weight:400;letter-spacing:0.568px;">Non-Compliant Alerts</div>
<div style="position:absolute;left:1493.9px;top:770.4px;width:31.59999999999991px;height:25.2px;background:#e5e7eb;border-radius:4px"></div>
<div class="t" style="left:1509.70px;top:774.12px;font-size:13.5px;line-height:18px;color:#6b7280;font-weight:400;letter-spacing:0.600px;transform:translateX(-50%);">7%</div>
<div class="t" style="left:1455.02px;top:772.66px;font-size:16px;line-height:21px;color:#1f2937;font-weight:400;-webkit-text-stroke:0.55px #1f2937;transform-origin:0 0;transform:scaleX(1.2561);">58</div>
<div style="position:absolute;left:326px;top:901px;width:395.5px;height:274.5px;box-sizing:border-box;background:#fff;border:1px solid #e5e7eb;border-radius:8px;box-shadow:0 1px 3px rgba(0,0,0,0.10),0 1px 2px rgba(0,0,0,0.07)"></div>
<div class="t" style="left:342.90px;top:919.18px;font-size:16.5px;line-height:21px;color:#111827;font-weight:400;letter-spacing:0.750px;-webkit-text-stroke:0.55px #111827;">Permit Status</div>
<div class="t" style="left:344.20px;top:963.59px;font-size:16.2px;line-height:21px;color:#6b7280;font-weight:400;letter-spacing:0.313px;">Approved Permits</div>
<div style="position:absolute;left:661.9px;top:961.4px;width:40.80000000000007px;height:25.2px;background:#e5e7eb;border-radius:4px"></div>
<div class="t" style="left:682.30px;top:965.12px;font-size:13.5px;line-height:18px;color:#6b7280;font-weight:400;letter-spacing:0.600px;transform:translateX(-50%);">87%</div>
<div class="t" style="left:600.23px;top:963.66px;font-size:16px;line-height:21px;color:#1f2937;font-weight:400;-webkit-text-stroke:0.55px #1f2937;transform-origin:0 0;transform:scaleX(1.1447);">1,089</div>
<div class="t" style="left:343.00px;top:998.59px;font-size:16.2px;line-height:21px;color:#6b7280;font-weight:400;letter-spacing:0.177px;">Pending Review</div>
<div style="position:absolute;left:670px;top:996.4px;width:32.700000000000045px;height:25.2px;background:#e5e7eb;border-radius:4px"></div>
<div class="t" style="left:686.35px;top:1000.12px;font-size:13.5px;line-height:18px;color:#6b7280;font-weight:400;letter-spacing:0.600px;transform:translateX(-50%);">4%</div>
<div class="t" style="left:632.94px;top:998.66px;font-size:16px;line-height:21px;color:#1f2937;font-weight:400;-webkit-text-stroke:0.55px #1f2937;transform-origin:0 0;transform:scaleX(1.1566);">47</div>
<div class="t" style="left:343.00px;top:1033.59px;font-size:16.2px;line-height:21px;color:#6b7280;font-weight:400;letter-spacing:0.218px;">Under Review</div>
<div style="position:absolute;left:670.9px;top:1031.4px;width:31.800000000000068px;height:25.2px;background:#e5e7eb;border-radius:4px"></div>
<div class="t" style="left:686.80px;top:1035.12px;font-size:13.5px;line-height:18px;color:#6b7280;font-weight:400;letter-spacing:0.600px;transform:translateX(-50%);">7%</div>
<div class="t" style="left:632.65px;top:1033.66px;font-size:16px;line-height:21px;color:#1f2937;font-weight:400;-webkit-text-stroke:0.55px #1f2937;transform-origin:0 0;transform:scaleX(1.2195);">83</div>
<div class="t" style="left:343.00px;top:1068.59px;font-size:16.2px;line-height:21px;color:#6b7280;font-weight:400;letter-spacing:0.620px;">Denied</div>
<div style="position:absolute;left:670px;top:1066.4px;width:32.700000000000045px;height:25.2px;background:#e5e7eb;border-radius:4px"></div>
<div class="t" style="left:686.35px;top:1070.12px;font-size:13.5px;line-height:18px;color:#6b7280;font-weight:400;letter-spacing:0.600px;transform:translateX(-50%);">2%</div>
<div class="t" style="left:632.44px;top:1068.66px;font-size:16px;line-height:21px;color:#1f2937;font-weight:400;-webkit-text-stroke:0.55px #1f2937;transform-origin:0 0;transform:scaleX(1.1963);">28</div>
<div style="position:absolute;left:737.5px;top:901px;width:395.5px;height:274.5px;box-sizing:border-box;background:#fff;border:1px solid #e5e7eb;border-radius:8px;box-shadow:0 1px 3px rgba(0,0,0,0.10),0 1px 2px rgba(0,0,0,0.07)"></div>
<div class="t" style="left:753.80px;top:919.18px;font-size:16.5px;line-height:21px;color:#111827;font-weight:400;letter-spacing:0.735px;-webkit-text-stroke:0.55px #111827;">Processing Metrics</div>
<div class="t" style="left:755.60px;top:957.85px;font-size:14px;line-height:18px;color:#6b7280;font-weight:400;letter-spacing:0.333px;">Avg. Review Time</div>
<div class="t" style="left:1054.71px;top:957.85px;font-size:14px;line-height:18px;color:#1f2937;font-weight:400;-webkit-text-stroke:0.5px #1f2937;transform-origin:0 0;transform:scaleX(1.1335);">2.3 days</div>
<div style="position:absolute;left:755px;top:983.2px;width:359.5px;height:6.2px;background:#e5e7eb;border-radius:3.1px"></div>
<div style="position:absolute;left:755px;top:983.2px;width:276.8px;height:6.2px;background:#2a5fc9;border-radius:3.1px"></div>
<div class="t" style="left:754.90px;top:1008.40px;font-size:14px;line-height:18px;color:#6b7280;font-weight:400;letter-spacing:0.529px;">Same-Day Approvals</div>
<div class="t" style="left:1081.30px;top:1008.40px;font-size:14px;line-height:18px;color:#1f2937;font-weight:400;-webkit-text-stroke:0.5px #1f2937;transform-origin:0 0;transform:scaleX(1.1926);">34%</div>
<div style="position:absolute;left:755px;top:1033.75px;width:359.5px;height:6.2px;background:#e5e7eb;border-radius:3.1px"></div>
<div style="position:absolute;left:755px;top:1033.75px;width:122.2px;height:6.2px;background:#2a5fc9;border-radius:3.1px"></div>
<div class="t" style="left:754.50px;top:1058.95px;font-size:14px;line-height:18px;color:#6b7280;font-weight:400;letter-spacing:0.490px;">FAA Verification Rate</div>
<div class="t" style="left:1080.85px;top:1058.95px;font-size:14px;line-height:18px;color:#1f2937;font-weight:400;-webkit-text-stroke:0.5px #1f2937;transform-origin:0 0;transform:scaleX(1.2090);">96%</div>
<div style="position:absolute;left:755px;top:1084.3px;width:359.5px;height:6.2px;background:#e5e7eb;border-radius:3.1px"></div>
<div style="position:absolute;left:755px;top:1084.3px;width:345.1px;height:6.2px;background:#2a5fc9;border-radius:3.1px"></div>
<div class="t" style="left:754.50px;top:1109.50px;font-size:14px;line-height:18px;color:#6b7280;font-weight:400;letter-spacing:0.611px;">Document Compliance</div>
<div class="t" style="left:1080.98px;top:1109.50px;font-size:14px;line-height:18px;color:#1f2937;font-weight:400;-webkit-text-stroke:0.5px #1f2937;transform-origin:0 0;transform:scaleX(1.2045);">89%</div>
<div style="position:absolute;left:755px;top:1134.85px;width:359.5px;height:6.2px;background:#e5e7eb;border-radius:3.1px"></div>
<div style="position:absolute;left:755px;top:1134.85px;width:320.0px;height:6.2px;background:#2a5fc9;border-radius:3.1px"></div>
<div style="position:absolute;left:1148.5px;top:901px;width:395.5px;height:274.5px;box-sizing:border-box;background:#fff;border:1px solid #e5e7eb;border-radius:8px;box-shadow:0 1px 3px rgba(0,0,0,0.10),0 1px 2px rgba(0,0,0,0.07)"></div>
<div class="t" style="left:1166.00px;top:919.18px;font-size:16.5px;line-height:21px;color:#111827;font-weight:400;letter-spacing:0.675px;-webkit-text-stroke:0.55px #111827;">Completed Flights</div>
<div class="t" style="left:1166.40px;top:963.59px;font-size:16.2px;line-height:21px;color:#6b7280;font-weight:400;letter-spacing:0.544px;">This Month</div>
<div class="t" style="left:1497.45px;top:963.66px;font-size:16px;line-height:21px;color:#1f2937;font-weight:400;-webkit-text-stroke:0.55px #1f2937;transform-origin:0 0;transform:scaleX(1.0830);">312</div>
<div class="t" style="left:1166.40px;top:998.59px;font-size:16.2px;line-height:21px;color:#6b7280;font-weight:400;letter-spacing:0.291px;">This Quarter</div>
<div class="t" style="left:1482.07px;top:998.66px;font-size:16px;line-height:21px;color:#1f2937;font-weight:400;-webkit-text-stroke:0.55px #1f2937;transform-origin:0 0;transform:scaleX(1.1079);">1,247</div>
<div class="t" style="left:1166.40px;top:1033.59px;font-size:16.2px;line-height:21px;color:#6b7280;font-weight:400;letter-spacing:0.236px;">Year to Date</div>
<div class="t" style="left:1479.13px;top:1033.66px;font-size:16px;line-height:21px;color:#1f2937;font-weight:400;-webkit-text-stroke:0.55px #1f2937;transform-origin:0 0;transform:scaleX(1.1830);">4,892</div>
<div class="t" style="left:1165.30px;top:1068.59px;font-size:16.2px;line-height:21px;color:#6b7280;font-weight:400;letter-spacing:0.353px;">Incident-Free Rate</div>
<div class="t" style="left:1473.37px;top:1068.66px;font-size:16px;line-height:21px;color:#1f2937;font-weight:400;-webkit-text-stroke:0.55px #1f2937;transform-origin:0 0;transform:scaleX(1.1636);">99.2%</div>
</body></html>
